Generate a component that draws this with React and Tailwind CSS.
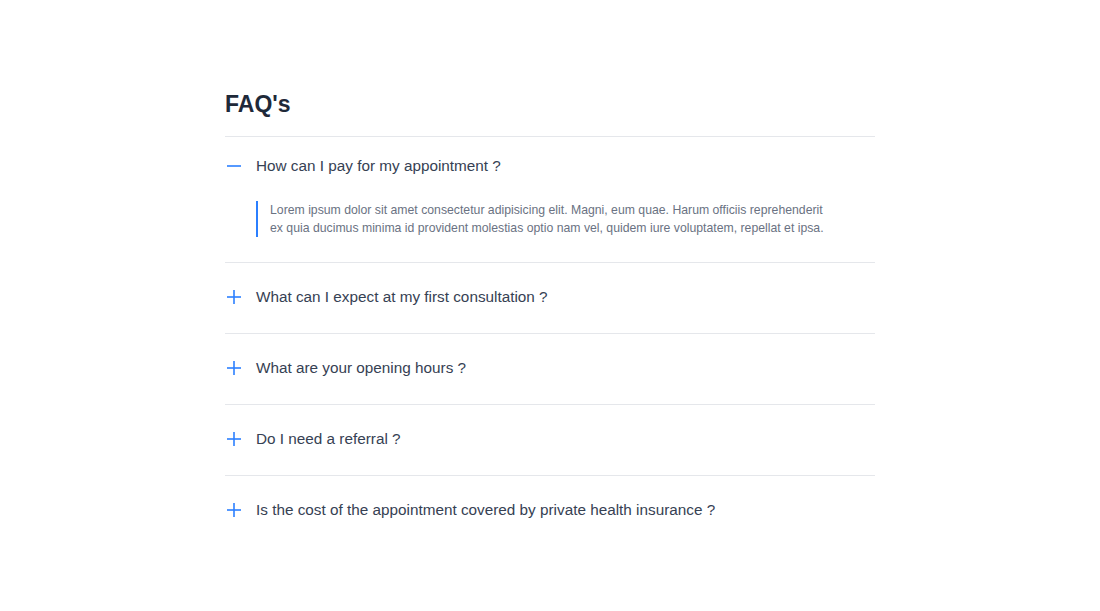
import React, { useState } from 'react';

const faqs = [
  {
    q: 'How can I pay for my appointment ?',
    a: 'Lorem ipsum dolor sit amet consectetur adipisicing elit. Magni, eum quae. Harum officiis reprehenderit ex quia ducimus minima id provident molestias optio nam vel, quidem iure voluptatem, repellat et ipsa.',
  },
  { q: 'What can I expect at my first consultation ?', a: '' },
  { q: 'What are your opening hours ?', a: '' },
  { q: 'Do I need a referral ?', a: '' },
  { q: 'Is the cost of the appointment covered by private health insurance ?', a: '' },
];

const ToggleIcon = ({ open }) => (
  <svg className="w-4 h-4 ml-px shrink-0 text-blue-500" viewBox="0 0 16 16" fill="none" stroke="currentColor" strokeWidth={1.6}>
    <path d="M1 8h14" />
    {!open && <path d="M8 1v14" />}
  </svg>
);

export default function App() {
  const [openIndex, setOpenIndex] = useState(0);

  return (
    <div className="min-h-[611px] bg-white" style={{ fontFamily: '"Liberation Sans", Arial, sans-serif' }}>
      <div className="w-[650px] mx-auto pt-[88px]">
        <h1 className="text-[23px] leading-8 font-bold text-gray-800">FAQ's</h1>

        <hr className="mt-4 border-gray-200" />

        {faqs.map((item, i) => {
          const open = openIndex === i;
          return (
            <div key={i}>
              <button
                className={`flex items-center gap-[14px] h-6 ${i === 0 ? 'mt-[17px]' : 'mt-[22px]'}`}
                onClick={() => setOpenIndex(open ? -1 : i)}
              >
                <ToggleIcon open={open} />
                <span className="text-[15.3px] text-gray-700">{item.q}</span>
              </button>

              {open && item.a && (
                <div className="flex mt-[23px] ml-[31px]">
                  <span className="w-0.5 bg-blue-500 shrink-0" />
                  <p className="w-[572px] pl-3 text-[12.25px] leading-[18px] text-gray-500">{item.a}</p>
                </div>
              )}

              {i < faqs.length - 1 && (
                <hr className={`border-gray-200 ${open && item.a ? 'mt-[25px]' : 'mt-6'}`} />
              )}
            </div>
          );
        })}
      </div>
    </div>
  );
}
